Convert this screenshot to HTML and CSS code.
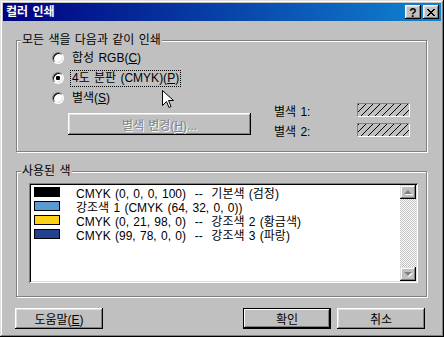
FILE: index.html
```html
<!DOCTYPE html>
<html lang="ko">
<head>
    <meta charset="UTF-8">
    <title>컬러 인쇄</title>
    <link rel="stylesheet" href="styles.css">
</head>
<body>
    <div class="window">
        <div class="titlebar">
            <span class="title">컬러 인쇄</span>
            <div class="title-btns">
                <button class="tbtn help">?</button>
                <button class="tbtn close">
                    <svg width="8" height="7" viewBox="0 0 8 7">
                        <path d="M0 0h2v1H0zM6 0h2v1H6zM1 1h2v1H1zM5 1h2v1H5zM2 2h4v1H2zM3 3h2v1H3zM2 4h4v1H2zM1 5h2v1H1zM5 5h2v1H5zM0 6h2v1H0zM6 6h2v1H6z" fill="#000"/>
                    </svg>
                </button>
            </div>
        </div>

        <div class="group">
            <div class="group-title">모든 색을 다음과 같이 인쇄</div>
            <div class="print-body">
                <div class="options">
                    <div class="option"><span class="radio"></span><span class="label">합성 RGB(<u>C</u>)</span></div>
                    <div class="option"><span class="radio checked"></span><span class="label focus">4도 분판 (CMYK)(<u>P</u>)</span></div>
                    <div class="option"><span class="radio"></span><span class="label">별색(<u>S</u>)</span></div>
                    <button class="btn spot-btn" disabled>별색 변경(<u>H</u>)...</button>
                </div>
                <div class="spots">
                    <div class="spot"><span class="spot-name">별색 1:</span><span class="hatch"></span></div>
                    <div class="spot"><span class="spot-name">별색 2:</span><span class="hatch"></span></div>
                </div>
            </div>
        </div>

        <div class="group">
            <div class="group-title">사용된 색</div>
            <div class="used-body">
                <div class="listbox">
                    <div class="list">
                        <div class="item"><span class="swatch black"></span><span>CMYK (0, 0, 0, 100)&nbsp; --&nbsp; 기본색 (검정)</span></div>
                        <div class="item"><span class="swatch light-blue"></span><span>강조색 1 (CMYK (64, 32, 0, 0))</span></div>
                        <div class="item"><span class="swatch gold"></span><span>CMYK (0, 21, 98, 0)&nbsp; --&nbsp; 강조색 2 (황금색)</span></div>
                        <div class="item"><span class="swatch blue"></span><span>CMYK (99, 78, 0, 0)&nbsp; --&nbsp; 강조색 3 (파랑)</span></div>
                    </div>
                    <div class="scrollbar">
                        <div class="sbtn"><span class="arrow up"></span></div>
                        <div class="track"></div>
                        <div class="sbtn"><span class="arrow down"></span></div>
                    </div>
                </div>
            </div>
        </div>

        <div class="actions">
            <button class="btn">도움말(<u>E</u>)</button>
            <button class="btn default ok">확인</button>
            <button class="btn cancel">취소</button>
        </div>

        <svg class="cursor" width="13" height="20" viewBox="0 0 13 20">
            <path d="M0.5 0.5V15.5L4.5 11.5L7 17.5L9 16.5L6.5 10.5H11.5Z" fill="#fff" stroke="#000" stroke-width="1"/>
        </svg>
    </div>
</body>
</html>
```

FILE: styles.css
```css
* {
    box-sizing: border-box;
}
html, body {
    margin: 0;
}
body {
    font-family: "Liberation Sans", "Noto Sans CJK KR", sans-serif;
    font-size: 12px;
    word-spacing: 1px;
    color: #000;
    background: #c0c0c0;
}
u {
    text-decoration-thickness: 1px;
    text-underline-offset: 1px;
}
.window {
    position: relative;
    width: 444px;
    height: 337px;
    padding: 3px;
    background: #c0c0c0;
    box-shadow: inset -1px -1px #000, inset 1px 1px #dfdfdf, inset -2px -2px #808080, inset 2px 2px #fff;
}
.titlebar {
    display: flex;
    align-items: center;
    height: 18px;
    padding: 0 2px 0 3px;
    background: linear-gradient(to right, #000080, #1084d0);
}
.title {
    flex: 1;
    color: #fff;
    font-weight: bold;
    line-height: 14px;
}
.title-btns {
    display: flex;
    gap: 2px;
}
.tbtn {
    display: flex;
    align-items: center;
    justify-content: center;
    width: 16px;
    height: 14px;
    padding: 0;
    border: 0;
    background: #c0c0c0;
    box-shadow: inset -1px -1px #000, inset 1px 1px #fff, inset -2px -2px #808080, inset 2px 2px #dfdfdf;
}
.help {
    font-family: "Liberation Sans", sans-serif;
    font-weight: bold;
    font-size: 12px;
    line-height: 12px;
    padding-top: 1px;
}
.close svg {
    display: block;
    margin-top: 1px;
}
.group {
    width: 411px;
    margin: 19px 0 0 13px;
    border: 1px solid #808080;
    box-shadow: inset 1px 1px #fff, 1px 1px #fff;
}
.group-title {
    display: table;
    margin: -8px 0 0 4px;
    padding: 0 1px;
    line-height: 14px;
    background: #c0c0c0;
}
.print-body {
    display: flex;
    padding: 1px 0 11px 35px;
}
.options {
    width: 222px;
}
.option {
    display: flex;
    align-items: center;
    height: 20px;
}
.radio {
    width: 12px;
    height: 12px;
    border-radius: 50%;
    border: 1px solid;
    border-color: #808080 #fff #fff #808080;
    background: #fff;
    box-shadow: inset 1px 1px #000, inset -1px -1px #dfdfdf;
}
.radio.checked {
    background: radial-gradient(circle at center, #000 0 2px, #fff 2.5px);
}
.label {
    margin-left: 7px;
    padding: 0 1px;
    line-height: 13px;
}
.label.focus {
    outline: 1px dotted #000;
    outline-offset: 0;
    padding: 1px 1px;
}
.btn {
    height: 21px;
    width: 88px;
    padding: 0;
    border: 0;
    font: inherit;
    word-spacing: inherit;
    color: #000;
    background: #c0c0c0;
    box-shadow: inset -1px -1px #000, inset 1px 1px #fff, inset -2px -2px #808080, inset 2px 2px #dfdfdf;
}
.btn:disabled {
    color: #808080;
    text-shadow: 1px 1px #fff;
}
.spot-btn {
    display: block;
    width: 183px;
    height: 22px;
    margin: 5px 0 0 16px;
}
.spots {
    margin-top: 52px;
}
.spot {
    display: flex;
    align-items: center;
    height: 20px;
}
.spot-name {
    width: 83px;
}
.hatch {
    width: 53px;
    height: 14px;
    border: 1px solid;
    border-color: #808080 #fff #fff #808080;
    background: repeating-linear-gradient(135deg, #000 0 1px, #c0c0c0 1px 5px);
}
.used-body {
    padding: 5px 0 13px 12px;
}
.listbox {
    display: flex;
    width: 389px;
    height: 100px;
    padding: 2px;
    background: #fff;
    box-shadow: inset 1px 1px #808080, inset -1px -1px #fff, inset 2px 2px #000, inset -2px -2px #dfdfdf;
}
.list {
    flex: 1;
    padding-left: 3px;
}
.item {
    display: flex;
    align-items: center;
    height: 14px;
    white-space: pre;
}
.swatch {
    width: 26px;
    height: 10px;
    margin-right: 16px;
    border: 1px solid #000;
}
.black { background: #000; }
.light-blue { background: #5b9bd3; }
.gold { background: #fcd116; }
.blue { background: #22428f; }
.scrollbar {
    display: flex;
    flex-direction: column;
    width: 16px;
}
.sbtn {
    display: flex;
    align-items: center;
    justify-content: center;
    height: 14px;
    background: #c0c0c0;
    box-shadow: inset -1px -1px #000, inset 1px 1px #dfdfdf, inset -2px -2px #808080, inset 2px 2px #fff;
}
.arrow {
    width: 0;
    height: 0;
    border-left: 4px solid transparent;
    border-right: 4px solid transparent;
    filter: drop-shadow(1px 1px 0 #fff);
}
.arrow.up {
    border-bottom: 4px solid #808080;
}
.arrow.down {
    border-top: 4px solid #808080;
}
.track {
    flex: 1;
    background: repeating-conic-gradient(#c0c0c0 0 25%, #fff 0 50%) 0 0 / 2px 2px;
}
.actions {
    display: flex;
    width: 410px;
    margin: 11px 0 0 12px;
}
.ok {
    margin-left: auto;
}
.cancel {
    margin-left: 6px;
}
.btn.default {
    border: 1px solid #000;
    box-shadow: inset -1px -1px #000, inset 1px 1px #fff, inset -2px -2px #808080;
}
.cursor {
    position: absolute;
    left: 162px;
    top: 90px;
}
```
